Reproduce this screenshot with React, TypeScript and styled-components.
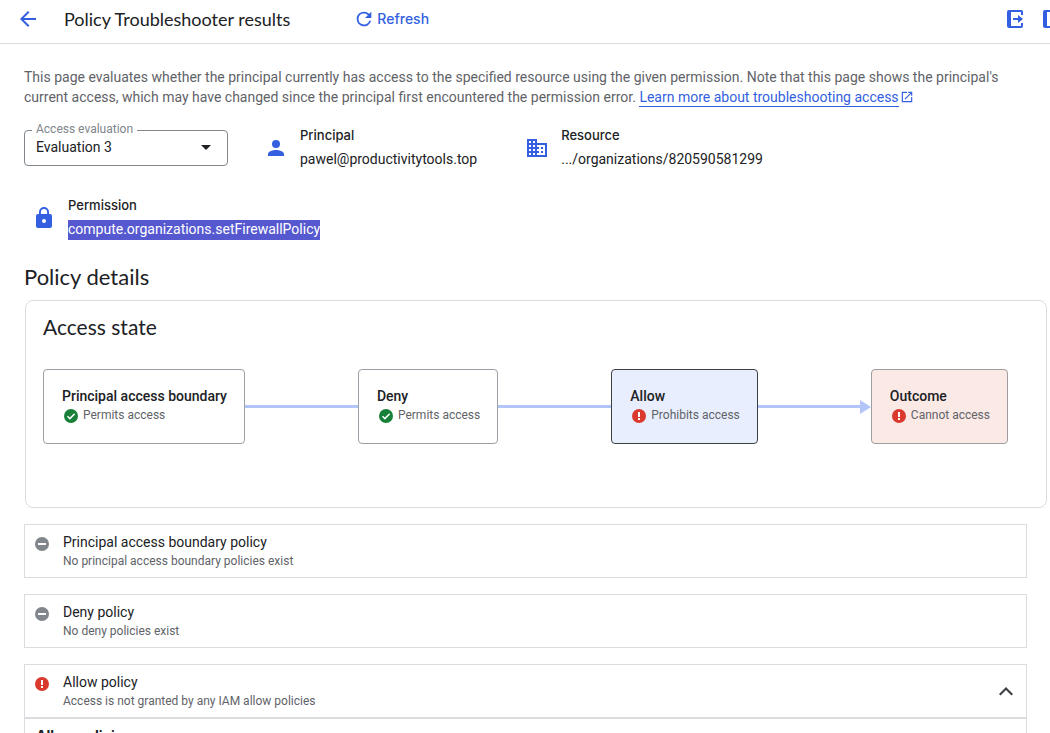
import React from 'react';
import styled, { createGlobalStyle } from 'styled-components';

const blue = '#335fe0';
const display = '"Google Sans", Lato, Roboto, sans-serif';
const label = '"Google Sans Text", Inter, Roboto, sans-serif';

const GlobalStyle = createGlobalStyle`
  *, *::before, *::after { box-sizing: border-box; }
  body {
    margin: 0;
    background: #fff;
    color: #202124;
    font: 400 14px/20px Roboto, sans-serif;
    overflow: hidden;
  }
  h1, h2, h3, h4, p, dl, dt, dd { margin: 0; }
  svg { display: block; flex: none; }
`;

const Page = styled.div`
  height: 100vh;
  overflow: hidden;
`;

const Toolbar = styled.header`
  display: flex;
  align-items: center;
  height: 44px;
  padding: 0 0 5px 16px;
  border-bottom: 1px solid #dadce0;
`;

const Title = styled.h1`
  margin: 0 55px 0 24px;
  font: 400 18px/24px ${display};
`;

const IconButton = styled.button`
  display: grid;
  place-items: center;
  width: 24px;
  height: 24px;
  padding: 0;
  border: 0;
  background: none;
  color: ${blue};
`;

const RefreshButton = styled.button`
  display: flex;
  align-items: center;
  gap: 2px;
  padding: 0 8px;
  border: 0;
  background: none;
  color: ${blue};
  font: 500 14px/24px ${label};
`;

const Actions = styled.div`
  display: flex;
  gap: 12px;
  margin: 0 -14px 0 auto;
`;

const Content = styled.main`
  padding: 23px 23px 0 24px;
`;

const Intro = styled.p`
  color: #5f6368;
`;

const DocLink = styled.a`
  color: ${blue};
  text-decoration: none;
  span { border-bottom: 1px solid ${blue}; padding-bottom: 1px; }
  svg { display: inline-block; margin-left: 1px; vertical-align: -2px; }
`;

const Summary = styled.div`
  display: flex;
  flex-wrap: wrap;
  align-items: center;
  gap: 26px 28px;
  margin-top: 19px;
`;

const Field = styled.div`
  position: relative;
  width: 204px;
  svg { position: absolute; right: 17px; top: 15px; pointer-events: none; }
`;

const FieldLabel = styled.label`
  position: absolute;
  top: -9px;
  left: 8px;
  padding: 0 4px;
  background: #fff;
  color: #80868b;
  font-size: 12px;
  line-height: 16px;
`;

const Select = styled.select`
  appearance: none;
  display: block;
  width: 100%;
  height: 36px;
  padding: 0 32px 2px 11px;
  border: 1px solid #80868b;
  border-radius: 4px;
  background: #fff;
  color: #202124;
  font: 400 14px/20px Roboto, sans-serif;
`;

const Fact = styled.div`
  display: flex;
  align-items: center;
  gap: 12px;
  padding: 0 12px 0 8px;
  color: ${blue};
`;

const FactText = styled.dl`
  color: #202124;
  line-height: 18px;
  dt { margin-bottom: 6px; font: 500 13px/18px ${label}; }
`;

const FactValue = styled.dd<{ $highlighted?: boolean }>`
  padding-bottom: 2px;
  ${({ $highlighted }) => $highlighted && 'background: #5558cf; color: #fff;'}
`;

const SectionTitle = styled.h2`
  margin: 23px 0 9px;
  font: 400 22px/28px ${display};
`;

const StatePanel = styled.section`
  margin: 0 -20px 16px 1px;
  padding: 14px 38px 63px 17px;
  border: 1px solid #dadce0;
  border-radius: 8px;
`;

const PanelTitle = styled.h3`
  margin-bottom: 30px;
  font: 400 21px/24px ${display};
`;

const Flow = styled.div`
  display: flex;
  align-items: center;
`;

type Tone = 'plain' | 'selected' | 'denied';
const tones: Record<Tone, string> = {
  plain: 'background: #fff; border-color: #9aa0a6;',
  selected: 'background: #e8eefd; border-color: #3c4043;',
  denied: 'background: #fbe9e6; border-color: #9e9e9e;',
};

const Node = styled.div<{ $tone: Tone }>`
  flex: none;
  height: 75px;
  padding: 16px 17px 0 18px;
  border: 1px solid;
  border-radius: 4px;
  ${({ $tone }) => tones[$tone]}
`;

const NodeTitle = styled.h4`
  font: 500 14px/20px Roboto, sans-serif;
`;

const Status = styled.div`
  display: flex;
  align-items: flex-start;
  gap: 3px;
  color: #5f6368;
  font-size: 12px;
  line-height: 18px;
  svg { margin-top: 1px; }
`;

const Connector = styled.div<{ $arrow?: boolean }>`
  flex: 1;
  display: flex;
  align-items: center;
  &::before { content: ''; flex: 1; height: 3px; background: #b3c4f8; }
  ${({ $arrow }) =>
    $arrow &&
    `&::after { content: ''; border: 7px solid transparent; border-left: 11px solid #b3c4f8; border-right: 0; }`}
`;

const PolicyCard = styled.section<{ $open?: boolean }>`
  display: flex;
  align-items: flex-start;
  gap: 12px;
  height: 54px;
  padding: 7px 8px;
  margin-bottom: ${({ $open }) => ($open ? 0 : 16)}px;
  border: 1px solid #dadce0;
  > svg { margin-top: 3px; }
`;

const PolicyText = styled.div`
  flex: 1;
  h3 { font: 400 14px/20px Roboto, sans-serif; }
  p { margin-top: 1px; color: #5f6368; font-size: 12px; line-height: 16px; }
`;

const ToggleButton = styled(IconButton)`
  align-self: center;
  color: #3c4043;
`;

const PolicyBody = styled.section`
  padding: 7px 11px;
  border: 1px solid #dadce0;
  h4 { font: 700 14px/20px ${label}; }
`;

const Check = () => (
  <svg width="18" height="18" viewBox="0 0 18 18">
    <circle cx="9" cy="9" r="7" fill="#188038" />
    <path d="M5.5 9.2l2.4 2.4 4.8-4.9" fill="none" stroke="#fff" strokeWidth="1.5" />
  </svg>
);

const Alert = () => (
  <svg width="18" height="18" viewBox="0 0 18 18">
    <circle cx="9" cy="9" r="7" fill="#d93a2d" />
    <path d="M8 5h2v5H8zM8 11h2v2H8z" fill="#fff" />
  </svg>
);

const Minus = () => (
  <svg width="18" height="18" viewBox="0 0 18 18">
    <circle cx="9" cy="9" r="7" fill="#80868b" />
    <path d="M5 8h8v2H5z" fill="#fff" />
  </svg>
);

const ExportIcon = () => (
  <svg width="18" height="18" viewBox="0 0 18 18" fill="currentColor">
    <path d="M2 0h12q2 0 2 2v3h-2V2H4v14h10v-3h2v3q0 2-2 2H2q-2 0-2-2V2q0-2 2-2z" />
    <path d="M6 8h5V5l5 4-5 4v-3H6z" />
  </svg>
);

const PanelIcon = () => (
  <svg width="18" height="18" viewBox="0 0 18 18" fill="currentColor">
    <path fillRule="evenodd" d="M2 0h14q2 0 2 2v14q0 2-2 2H2q-2 0-2-2V2q0-2 2-2zm2 2v14h12V2z" />
  </svg>
);

const Glyph = ({ d, size = 24 }: { d: string; size?: number }) => (
  <svg width={size} height={size} viewBox="0 0 24 24" fill="currentColor">
    <path d={d} />
  </svg>
);

const icons = {
  back: 'M20 11H7.83l5.59-5.59L12 4l-8 8 8 8 1.41-1.41L7.83 13H20v-2z',
  refresh:
    'M17.65 6.35A7.96 7.96 0 0 0 12 4a8 8 0 1 0 7.73 10h-2.08A6 6 0 1 1 12 6c1.66 0 3.14.69 4.22 1.78L13 11h7V4l-2.35 2.35z',
  open: 'M19 19H5V5h7V3H3v18h18v-9h-2v7zM14 3v2h3.59l-9.83 9.83 1.41 1.41L19 6.41V10h2V3h-7z',
  person: 'M12 12a4 4 0 1 0 0-8 4 4 0 0 0 0 8zm0 2c-2.67 0-8 1.34-8 4v2h16v-2c0-2.66-5.33-4-8-4z',
  domain:
    'M12 7V3H2v18h20V7H12zM6 19H4v-2h2v2zm0-4H4v-2h2v2zm0-4H4V9h2v2zm0-4H4V5h2v2zm4 12H8v-2h2v2zm0-4H8v-2h2v2zm0-4H8V9h2v2zm0-4H8V5h2v2zm10 12h-8v-2h2v-2h-2v-2h2v-2h-2V9h8v10zm-2-8h-2v2h2v-2zm0 4h-2v2h2v-2z',
  lock: 'M18 8h-1V6A5 5 0 0 0 7 6v2H6a2 2 0 0 0-2 2v10c0 1.1.9 2 2 2h12a2 2 0 0 0 2-2V10a2 2 0 0 0-2-2zm-6 9a2 2 0 1 1 0-4 2 2 0 0 1 0 4zm3.1-9H8.9V6a3.1 3.1 0 0 1 6.2 0v2z',
  up: 'M12 8l-7 7 1.5 1.5L12 11l5.5 5.5L19 15z',
};

export default function App() {
  return (
    <Page>
      <GlobalStyle />
      <Toolbar>
        <IconButton aria-label="Back"><Glyph d={icons.back} /></IconButton>
        <Title>Policy Troubleshooter results</Title>
        <RefreshButton><Glyph d={icons.refresh} size={22} />Refresh</RefreshButton>
        <Actions>
          <IconButton aria-label="Export"><ExportIcon /></IconButton>
          <IconButton aria-label="Show panel"><PanelIcon /></IconButton>
        </Actions>
      </Toolbar>
      <Content>
        <Intro>
          This page evaluates whether the principal currently has access to the specified resource using the given
          permission. Note that this page shows the principal's current access, which may have changed since the
          principal first encountered the permission error.{' '}
          <DocLink href="#docs">
            <span>Learn more about troubleshooting access</span>
            <Glyph d={icons.open} size={14} />
          </DocLink>
        </Intro>
        <Summary>
          <Field>
            <Select id="evaluation" defaultValue="3">
              <option value="3">Evaluation 3</option>
            </Select>
            <FieldLabel htmlFor="evaluation">Access evaluation</FieldLabel>
            <svg width="10" height="5" viewBox="0 0 10 5"><path d="M0 0h10L5 5z" fill="#202124" /></svg>
          </Field>
          <Fact>
            <Glyph d={icons.person} />
            <FactText><dt>Principal</dt><FactValue>pawel@productivitytools.top</FactValue></FactText>
          </Fact>
          <Fact>
            <Glyph d={icons.domain} />
            <FactText><dt>Resource</dt><FactValue>.../organizations/820590581299</FactValue></FactText>
          </Fact>
          <Fact>
            <Glyph d={icons.lock} />
            <FactText>
              <dt>Permission</dt>
              <FactValue $highlighted>compute.organizations.setFirewallPolicy</FactValue>
            </FactText>
          </Fact>
        </Summary>
        <SectionTitle>Policy details</SectionTitle>
        <StatePanel>
          <PanelTitle>Access state</PanelTitle>
          <Flow>
            <Node $tone="plain">
              <NodeTitle>Principal access boundary</NodeTitle>
              <Status><Check />Permits access</Status>
            </Node>
            <Connector />
            <Node $tone="plain">
              <NodeTitle>Deny</NodeTitle>
              <Status><Check />Permits access</Status>
            </Node>
            <Connector />
            <Node $tone="selected">
              <NodeTitle>Allow</NodeTitle>
              <Status><Alert />Prohibits access</Status>
            </Node>
            <Connector $arrow />
            <Node $tone="denied">
              <NodeTitle>Outcome</NodeTitle>
              <Status><Alert />Cannot access</Status>
            </Node>
          </Flow>
        </StatePanel>
        <PolicyCard>
          <Minus />
          <PolicyText>
            <h3>Principal access boundary policy</h3>
            <p>No principal access boundary policies exist</p>
          </PolicyText>
        </PolicyCard>
        <PolicyCard>
          <Minus />
          <PolicyText>
            <h3>Deny policy</h3>
            <p>No deny policies exist</p>
          </PolicyText>
        </PolicyCard>
        <PolicyCard $open>
          <Alert />
          <PolicyText>
            <h3>Allow policy</h3>
            <p>Access is not granted by any IAM allow policies</p>
          </PolicyText>
          <ToggleButton aria-label="Collapse allow policy"><Glyph d={icons.up} /></ToggleButton>
        </PolicyCard>
        <PolicyBody><h4>Allow policies</h4></PolicyBody>
      </Content>
    </Page>
  );
}
